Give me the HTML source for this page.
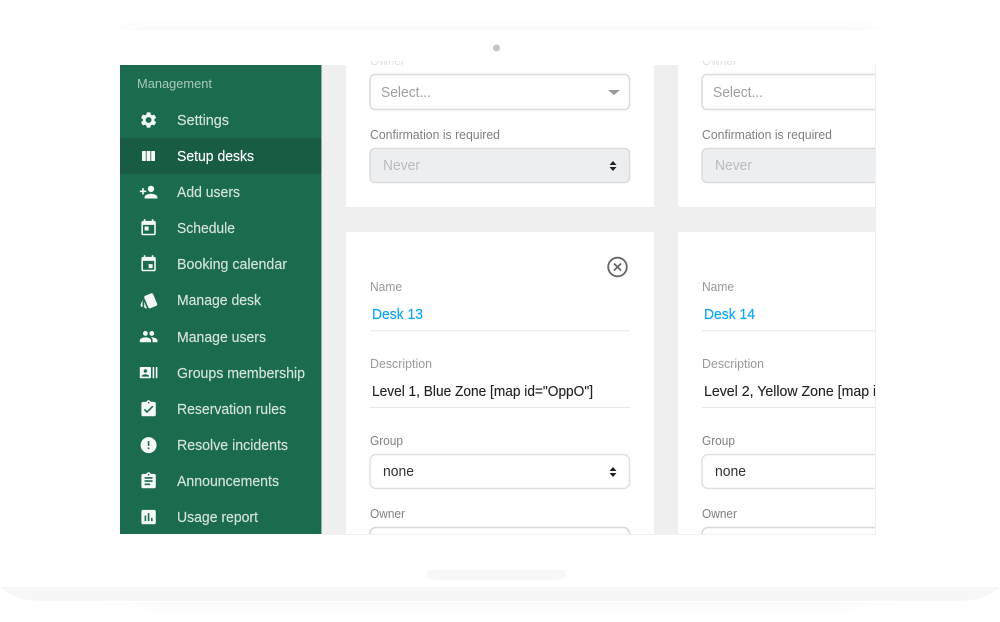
<!DOCTYPE html>
<html lang="en"><head><meta charset="utf-8"><title>Setup desks</title>
<style>
html,body{margin:0;padding:0;background:#fff}
svg{display:block;filter:blur(.3px)}
text{font-family:"Liberation Sans",Arial,sans-serif}
.m{font-size:14.5px;fill:#d3e3dc;stroke:#d3e3dc;stroke-width:.15px}
.l{font-size:12.5px;fill:#808080}
.v{font-size:14.5px;fill:#222;stroke:#222;stroke-width:.12px}
</style></head><body>
<svg width="1000" height="622" viewBox="0 0 1000 622" xmlns="http://www.w3.org/2000/svg">
<defs>
<linearGradient id="top" x1="0" y1="0" x2="0" y2="1"><stop offset="0" stop-color="#fff"/><stop offset="1" stop-color="#f8f8f8"/></linearGradient>
<linearGradient id="bot" x1="0" y1="0" x2="0" y2="1"><stop offset="0" stop-color="#fafafa"/><stop offset="1" stop-color="#fff"/></linearGradient>
<linearGradient id="fl" x1="0" y1="0" x2="1" y2="0"><stop offset="0" stop-color="#fff"/><stop offset="1" stop-color="#fff" stop-opacity="0"/></linearGradient>
<linearGradient id="fr" x1="0" y1="0" x2="1" y2="0"><stop offset="0" stop-color="#fff" stop-opacity="0"/><stop offset="1" stop-color="#fff"/></linearGradient>
<clipPath id="scr"><rect x="120" y="65" width="755" height="469"/></clipPath>
<clipPath id="own"><rect x="340" y="61" width="540" height="4"/></clipPath>
</defs>
<rect width="1000" height="622" fill="#fff"/>
<rect x="105" y="18" width="785" height="12" fill="url(#top)"/>
<rect x="105" y="18" width="40" height="12" fill="url(#fl)"/>
<rect x="850" y="18" width="40" height="12" fill="url(#fr)"/>
<circle cx="496.500" cy="48" r="3.500" fill="#c4c4c4"/>
<path d="M0 587H1000C990 597 975 601 955 601H45C25 601 10 597 0 587Z" fill="#f7f7f7"/>
<rect x="100" y="602" width="800" height="14" fill="url(#bot)"/>
<rect x="100" y="602" width="60" height="14" fill="url(#fl)"/>
<rect x="840" y="602" width="60" height="14" fill="url(#fr)"/>
<path d="M427 570H566V574Q566 580 558 580H435Q427 580 427 574Z" fill="#f7f7f7"/>

<g clip-path="url(#own)" opacity=".25">
<text x="370" y="65" class="l" textLength="35" lengthAdjust="spacingAndGlyphs">Owner</text>
<text x="702" y="65" class="l" textLength="35" lengthAdjust="spacingAndGlyphs">Owner</text>
</g>

<g clip-path="url(#scr)">
<rect x="322" y="65" width="553" height="469" fill="#efefef"/>
<rect x="346" y="55" width="308" height="152" rx="2" fill="#fff"/>
<rect x="678" y="55" width="220" height="152" rx="2" fill="#fff"/>
<rect x="346" y="232" width="308" height="320" rx="2" fill="#fff"/>
<rect x="678" y="232" width="220" height="320" rx="2" fill="#fff"/>

<rect x="370" y="74.500" width="259.500" height="35" rx="5" fill="#fff" stroke="#dcdcdc" stroke-width="1.500"/>
<text x="381" y="97" font-size="14.5" fill="#a0a0a0" textLength="50" lengthAdjust="spacingAndGlyphs">Select...</text>
<path d="M608 90H620L614 95Z" fill="#999"/>
<text x="370" y="139" class="l" textLength="130" lengthAdjust="spacingAndGlyphs">Confirmation is required</text>
<rect x="370" y="148.500" width="259.500" height="34" rx="5" fill="#eceef0" stroke="#dcdcdc" stroke-width="1.500"/>
<text x="383" y="170" font-size="14.5" fill="#bcbcbc" textLength="37" lengthAdjust="spacingAndGlyphs">Never</text>
<path d="M609.500 165L613 161L616.500 165ZM609.500 167L616.500 167L613 171Z" fill="#222"/>

<rect x="702" y="74.500" width="259.500" height="35" rx="5" fill="#fff" stroke="#dcdcdc" stroke-width="1.500"/>
<text x="713" y="97" font-size="14.5" fill="#a0a0a0" textLength="50" lengthAdjust="spacingAndGlyphs">Select...</text>
<text x="702" y="139" class="l" textLength="130" lengthAdjust="spacingAndGlyphs">Confirmation is required</text>
<rect x="702" y="148.500" width="259.500" height="34" rx="5" fill="#eceef0" stroke="#dcdcdc" stroke-width="1.500"/>
<text x="715" y="170" font-size="14.5" fill="#bcbcbc" textLength="37" lengthAdjust="spacingAndGlyphs">Never</text>

<circle cx="617.500" cy="267" r="9.300" fill="none" stroke="#666" stroke-width="1.800"/>
<path d="M614 263.500L621 270.500M621 263.500L614 270.500" stroke="#666" stroke-width="1.800" fill="none"/>

<text x="370" y="291" class="l" style="fill:#999" textLength="32" lengthAdjust="spacingAndGlyphs">Name</text>
<text x="372" y="319" font-size="14.5" fill="#0ea5f5" stroke="#0ea5f5" stroke-width=".2" textLength="51" lengthAdjust="spacingAndGlyphs">Desk 13</text>
<rect x="370" y="330" width="260" height="1.500" fill="#eee"/>
<text x="370" y="368" class="l" style="fill:#999" textLength="62" lengthAdjust="spacingAndGlyphs">Description</text>
<text x="372" y="396" class="v" textLength="221" lengthAdjust="spacingAndGlyphs">Level 1, Blue Zone [map id="OppO"]</text>
<rect x="370" y="407" width="260" height="1" fill="#e8e8e8"/>
<text x="370" y="445" class="l" textLength="33" lengthAdjust="spacingAndGlyphs">Group</text>
<rect x="370" y="454.500" width="259.500" height="34" rx="6" fill="#fff" stroke="#e0e0e0" stroke-width="1.500"/>
<text x="383" y="476" font-size="14.5" fill="#333" textLength="31" lengthAdjust="spacingAndGlyphs">none</text>
<path d="M609.500 471L613 467L616.500 471ZM609.500 473L616.500 473L613 477Z" fill="#222"/>
<text x="370" y="518" class="l" textLength="35" lengthAdjust="spacingAndGlyphs">Owner</text>
<rect x="370" y="527.500" width="259.500" height="34" rx="6" fill="#fff" stroke="#d8d8d8" stroke-width="1.500"/>

<text x="702" y="291" class="l" style="fill:#999" textLength="32" lengthAdjust="spacingAndGlyphs">Name</text>
<text x="704" y="319" font-size="14.5" fill="#0ea5f5" stroke="#0ea5f5" stroke-width=".2" textLength="51" lengthAdjust="spacingAndGlyphs">Desk 14</text>
<rect x="702" y="330" width="180" height="1.500" fill="#eee"/>
<text x="702" y="368" class="l" style="fill:#999" textLength="62" lengthAdjust="spacingAndGlyphs">Description</text>
<text x="704" y="396" class="v" textLength="240" lengthAdjust="spacingAndGlyphs">Level 2, Yellow Zone [map id="OppO"]</text>
<rect x="702" y="407" width="180" height="1" fill="#e8e8e8"/>
<text x="702" y="445" class="l" textLength="33" lengthAdjust="spacingAndGlyphs">Group</text>
<rect x="702" y="454.500" width="259.500" height="34" rx="6" fill="#fff" stroke="#e0e0e0" stroke-width="1.500"/>
<text x="715" y="476" font-size="14.5" fill="#333" textLength="31" lengthAdjust="spacingAndGlyphs">none</text>
<text x="702" y="518" class="l" textLength="35" lengthAdjust="spacingAndGlyphs">Owner</text>
<rect x="702" y="527.500" width="259.500" height="34" rx="6" fill="#fff" stroke="#d8d8d8" stroke-width="1.500"/>

<rect x="120" y="65" width="201.500" height="469" fill="#1b6b4e"/>
<rect x="120" y="138" width="201.500" height="36" fill="#175c43"/>
</g>
<rect x="875" y="65" width="1" height="470" fill="#eef0f5"/>
<rect x="322" y="534" width="554" height="1" fill="#eef0f5"/>

<text x="137" y="88" font-size="12.5" fill="#a9c9bb" textLength="75" lengthAdjust="spacingAndGlyphs">Management</text>
<text x="177" y="125" class="m" textLength="52" lengthAdjust="spacingAndGlyphs">Settings</text>
<text x="177" y="161" class="m" style="fill:#fff;stroke:#fff" textLength="77" lengthAdjust="spacingAndGlyphs">Setup desks</text>
<text x="177" y="197" class="m" textLength="63" lengthAdjust="spacingAndGlyphs">Add users</text>
<text x="177" y="233" class="m" textLength="58" lengthAdjust="spacingAndGlyphs">Schedule</text>
<text x="177" y="269" class="m" textLength="110" lengthAdjust="spacingAndGlyphs">Booking calendar</text>
<text x="177" y="305" class="m" textLength="84" lengthAdjust="spacingAndGlyphs">Manage desk</text>
<text x="177" y="342" class="m" textLength="89" lengthAdjust="spacingAndGlyphs">Manage users</text>
<text x="177" y="378" class="m" textLength="128" lengthAdjust="spacingAndGlyphs">Groups membership</text>
<text x="177" y="414" class="m" textLength="109" lengthAdjust="spacingAndGlyphs">Reservation rules</text>
<text x="177" y="450" class="m" textLength="111" lengthAdjust="spacingAndGlyphs">Resolve incidents</text>
<text x="177" y="486" class="m" textLength="102" lengthAdjust="spacingAndGlyphs">Announcements</text>
<text x="177" y="522" class="m" textLength="81" lengthAdjust="spacingAndGlyphs">Usage report</text>

<g fill="#f4f8f6">
<path transform="translate(139 110.400) scale(.8)" d="M19.14 12.94c.04-.3.06-.61.06-.94 0-.32-.02-.64-.07-.94l2.03-1.58c.18-.14.23-.41.12-.61l-1.92-3.32c-.12-.22-.37-.29-.59-.22l-2.39.96c-.5-.38-1.03-.7-1.62-.94l-.36-2.54c-.04-.24-.24-.41-.48-.41h-3.84c-.24 0-.43.17-.47.41l-.36 2.54c-.59.24-1.13.57-1.62.94l-2.39-.96c-.22-.08-.47 0-.59.22L2.74 8.87c-.12.21-.08.47.12.61l2.03 1.58c-.05.3-.09.63-.09.94s.02.64.07.94l-2.03 1.58c-.18.14-.23.41-.12.61l1.92 3.32c.12.22.37.29.59.22l2.39-.96c.5.38 1.03.7 1.62.94l.36 2.54c.05.24.24.41.48.41h3.84c.24 0 .44-.17.47-.41l.36-2.54c.59-.24 1.13-.56 1.62-.94l2.39.96c.22.08.47 0 .59-.22l1.92-3.32c.12-.22.07-.47-.12-.61l-2.01-1.58zM12 15.6c-1.98 0-3.6-1.62-3.6-3.6s1.62-3.6 3.6-3.6 3.6 1.62 3.6 3.6-1.62 3.6-3.6 3.6z"/>
<rect x="142" y="151" width="3.800" height="10" rx=".5"/>
<rect x="146.600" y="151" width="3.800" height="10"/>
<rect x="151.200" y="151" width="3.800" height="10" rx=".5"/>
<path transform="translate(139 182.500) scale(.8)" d="M15 12c2.21 0 4-1.79 4-4s-1.790-4-4-4-4 1.790-4 4 1.790 4 4 4zm-9-2V7H4v3H1v2h3v3h2v-3h3v-2H6zm9 4c-2.670 0-8 1.340-8 4v2h16v-2c0-2.660-5.330-4-8-4z"/>
<path transform="translate(139 218.500) scale(.8)" d="M19 3h-1V1h-2v2H8V1H6v2H5c-1.110 0-1.990.9-1.990 2L3 19c0 1.100.89 2 2 2h14c1.100 0 2-.9 2-2V5c0-1.100-.9-2-2-2zm0 16H5V8h14v11zM7 10h5v5H7z"/>
<path transform="translate(139 254.500) scale(.8)" d="M17 12h-5v5h5v-5zM16 1v2H8V1H6v2H5c-1.110 0-1.990.9-1.990 2L3 19c0 1.100.89 2 2 2h14c1.100 0 2-.9 2-2V5c0-1.100-.9-2-2-2h-1V1h-2zm3 18H5V8h14v11z"/>
<path transform="translate(139.500 291) scale(.8)" d="M2.530 19.650l1.340.56v-9.030l-2.430 5.860c-.41 1.020.08 2.190 1.090 2.610zm19.500-3.700L17.070 3.980c-.31-.75-1.040-1.210-1.810-1.230-.26 0-.53.04-.79.15L7.100 5.950c-.75.31-1.210 1.030-1.230 1.800-.01.27.04.54.15.8l4.960 11.970c.31.76 1.050 1.220 1.830 1.230.26 0 .52-.05.77-.15l7.360-3.050c1.020-.42 1.510-1.590 1.090-2.600zm-16.150 3.800c0 1.100.9 2 2 2h1.450l-3.450-8.340v6.340z"/>
<path transform="translate(139 327) scale(.8)" d="M16 11c1.660 0 2.990-1.340 2.990-3S17.660 5 16 5c-1.660 0-3 1.340-3 3s1.340 3 3 3zm-8 0c1.660 0 2.990-1.340 2.990-3S9.660 5 8 5C6.340 5 5 6.340 5 8s1.340 3 3 3zm0 2c-2.330 0-7 1.170-7 3.500V19h14v-2.500c0-2.330-4.670-3.500-7-3.500zm8 0c-.29 0-.62.02-.97.05 1.160.84 1.970 1.970 1.970 3.450V19h6v-2.500c0-2.330-4.670-3.500-7-3.500z"/>
<path transform="translate(139 363) scale(.8)" d="M21 5v14h2V5h-2zm-4 14h2V5h-2v14zM14 5H2c-.55 0-1 .45-1 1v12c0 .55.45 1 1 1h12c.55 0 1-.45 1-1V6c0-.55-.45-1-1-1zM8 7.750c1.240 0 2.250 1.010 2.250 2.250S9.240 12.250 8 12.250 5.750 11.240 5.750 10 6.760 7.750 8 7.750zM12.500 17h-9v-.75c0-1.500 3-2.250 4.500-2.250s4.500.75 4.500 2.250V17z"/>
<path transform="translate(139 399.500) scale(.8)" d="M19 3h-4.180C14.400 1.840 13.300 1 12 1c-1.300 0-2.400.84-2.820 2H5c-1.100 0-2 .9-2 2v14c0 1.100.9 2 2 2h14c1.100 0 2-.9 2-2V5c0-1.100-.9-2-2-2zm-7 0c.55 0 1 .45 1 1s-.45 1-1 1-1-.45-1-1 .45-1 1-1zm-2 14l-4-4 1.410-1.410L10 14.170l6.590-6.590L18 9l-8 8z"/>
<path transform="translate(139 435.500) scale(.8)" d="M12 2C6.480 2 2 6.480 2 12s4.480 10 10 10 10-4.480 10-10S17.520 2 12 2zm1 15h-2v-2h2v2zm0-4h-2V7h2v6z"/>
<path transform="translate(139 471.500) scale(.8)" d="M19 3h-4.180C14.400 1.840 13.300 1 12 1c-1.300 0-2.400.84-2.820 2H5c-1.100 0-2 .9-2 2v14c0 1.100.9 2 2 2h14c1.100 0 2-.9 2-2V5c0-1.100-.9-2-2-2zm-7 0c.55 0 1 .45 1 1s-.45 1-1 1-1-.45-1-1 .45-1 1-1zm2 14H7v-2h7v2zm3-4H7v-2h10v2zm0-4H7V7h10v2z"/>
<path transform="translate(139 507.500) scale(.8)" d="M19 3H5c-1.100 0-2 .9-2 2v14c0 1.100.9 2 2 2h14c1.100 0 2-.9 2-2V5c0-1.100-.9-2-2-2zM9 17H7v-7h2v7zm4 0h-2V7h2v10zm4 0h-2v-4h2v4z"/>
</g>
</svg>
</body></html>
